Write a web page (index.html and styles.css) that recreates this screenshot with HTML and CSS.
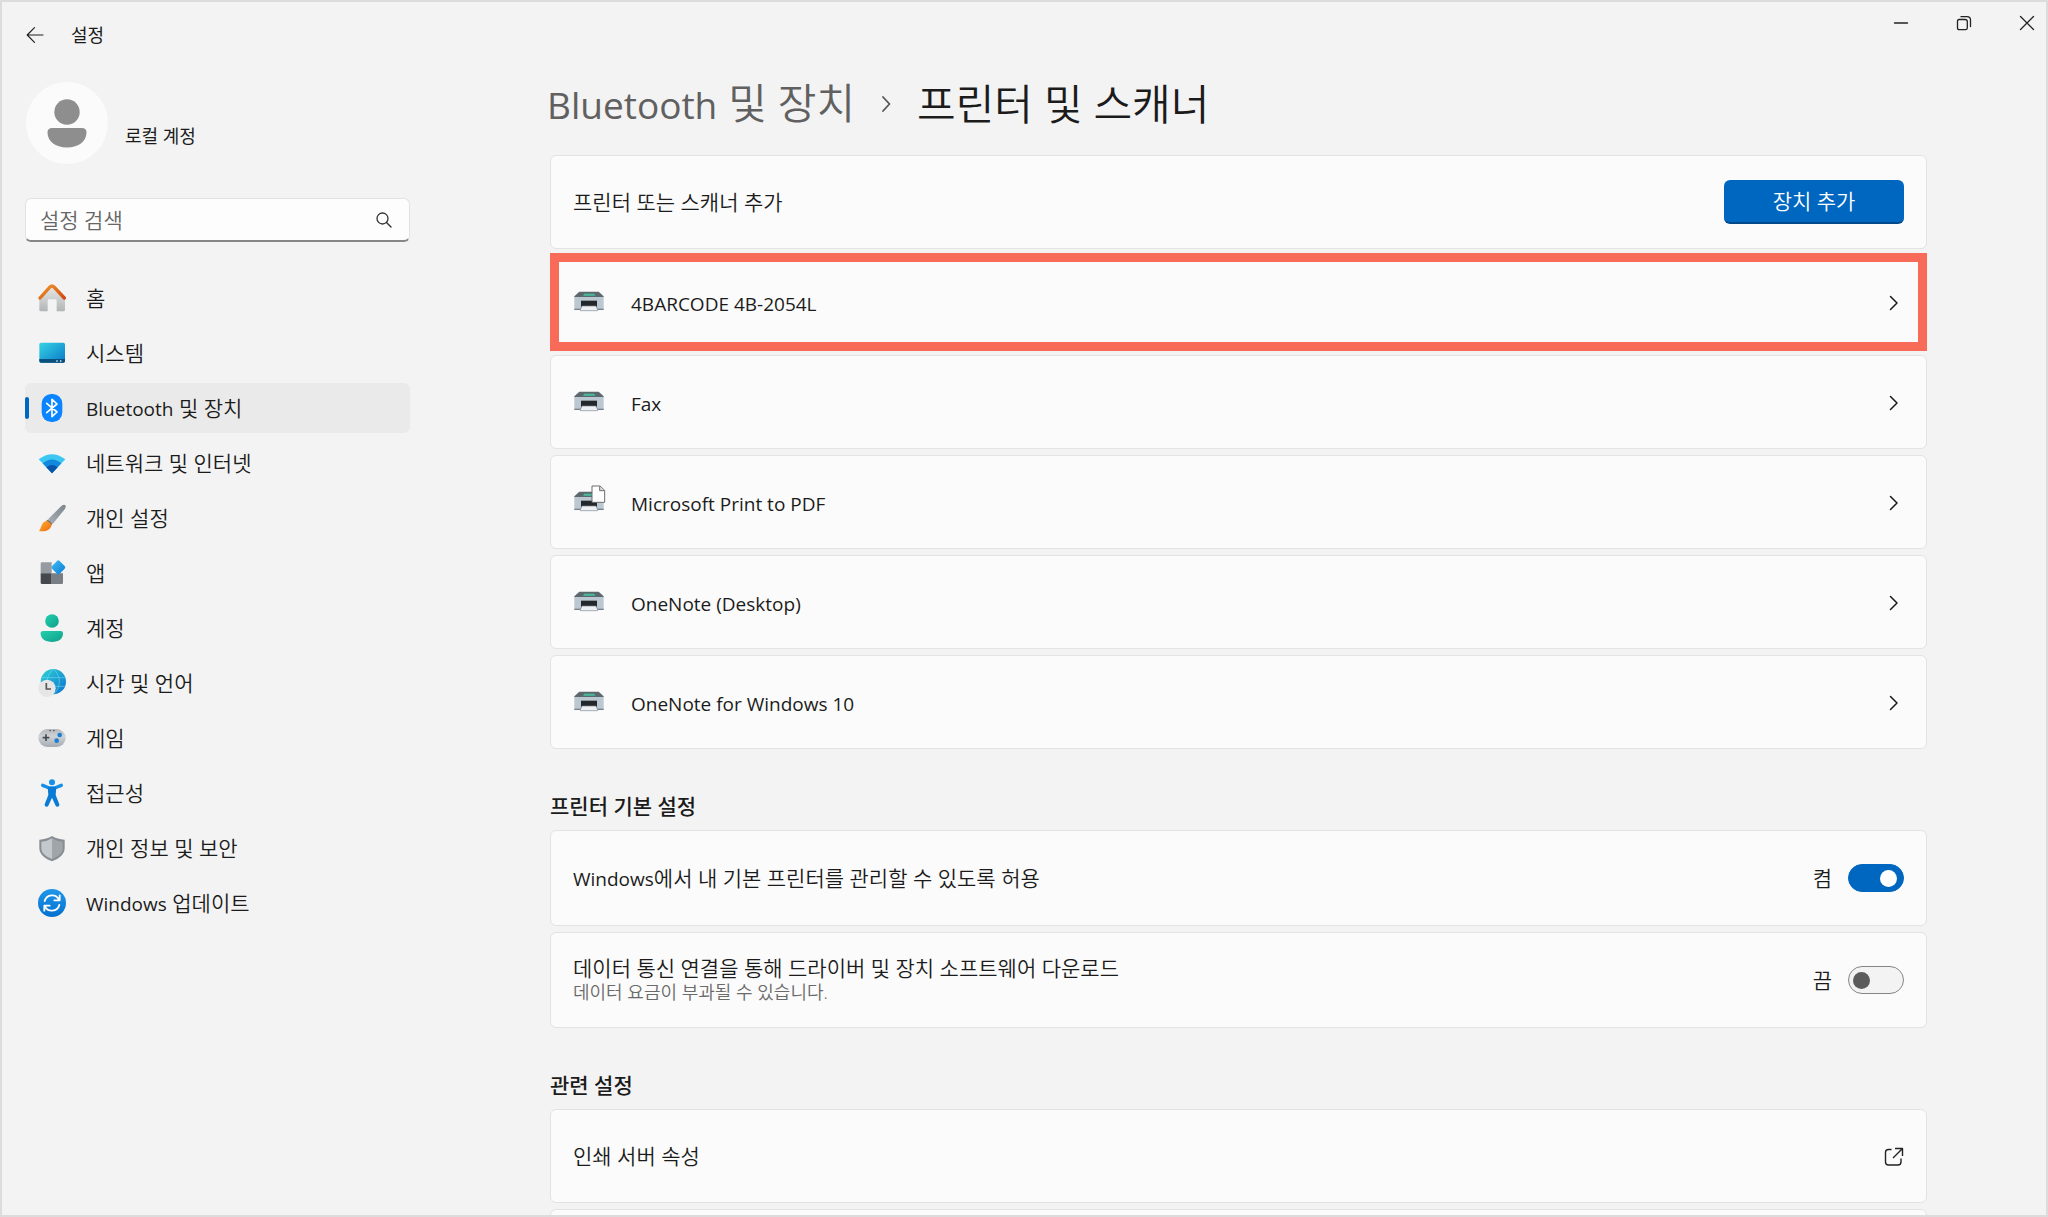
FILE: index.html
```html
<!DOCTYPE html>
<html lang="ko">
<head>
<meta charset="utf-8">
<meta name="viewport" content="width=device-width, initial-scale=1">
<title>설정</title>
<link rel="stylesheet" href="styles.css">
</head>
<body>
<svg class="defs" aria-hidden="true">
  <defs>
    <linearGradient id="g-roof" x1="0" y1="0" x2="1" y2="1"><stop offset="0" stop-color="#f0962a"/><stop offset="1" stop-color="#d24a10"/></linearGradient>
    <linearGradient id="g-wall" x1="0" y1="0" x2="0" y2="1"><stop offset="0" stop-color="#e8e8e8"/><stop offset="1" stop-color="#b2b4b6"/></linearGradient>
    <linearGradient id="g-screen" x1="0" y1="0" x2="1" y2="1"><stop offset="0" stop-color="#35d4e4"/><stop offset="1" stop-color="#0a78c8"/></linearGradient>
    <linearGradient id="g-handle" x1="1" y1="0" x2="0" y2="1"><stop offset="0" stop-color="#7c848c"/><stop offset="1" stop-color="#a9b0b8"/></linearGradient>
    <linearGradient id="g-tip" x1="0" y1="0" x2="1" y2="1"><stop offset="0" stop-color="#ffb02e"/><stop offset="1" stop-color="#ee6a10"/></linearGradient>
    <linearGradient id="g-diamond" x1="0" y1="0" x2="1" y2="1"><stop offset="0" stop-color="#43bdf2"/><stop offset="1" stop-color="#0b7cd6"/></linearGradient>
    <linearGradient id="g-person" x1="0" y1="0" x2="1" y2="1"><stop offset="0" stop-color="#22cfae"/><stop offset="1" stop-color="#10a08a"/></linearGradient>
    <linearGradient id="g-globe" x1="0" y1="0" x2="1" y2="1"><stop offset="0" stop-color="#2fd3d6"/><stop offset="1" stop-color="#0b71cf"/></linearGradient>
    <linearGradient id="g-pad" x1="0" y1="0" x2="0" y2="1"><stop offset="0" stop-color="#b4b7bb"/><stop offset=".4" stop-color="#cfd2d5"/><stop offset="1" stop-color="#a6abb2"/></linearGradient>
    <linearGradient id="g-sync" x1="0" y1="0" x2="0" y2="1"><stop offset="0" stop-color="#1f97ea"/><stop offset="1" stop-color="#0471cf"/></linearGradient>
    <symbol id="printer" viewBox="0 0 90 60" overflow="visible">
      <path d="M16 2H74L89 16V19H1V16Z" fill="#5c676e"/>
      <path d="M31 8H61L64 14H27Z" fill="#45bf9a"/>
      <path d="M1 18H89V56H1Z" fill="#bcc8d1"/>
      <path d="M1 53H89V57H1Z" fill="#75818b"/>
      <path d="M21 29H69V49H21Z" fill="#23282c"/>
      <path d="M24 45H66L71 56V59H19V56Z" fill="#eef1f3" stroke="#7d878f" stroke-width="2"/>
    </symbol>
    <symbol id="chevron" viewBox="0 0 20 20"><path d="M6.500 3.500 13 10 6.500 16.500" fill="none" stroke="currentColor" stroke-width="1.500" stroke-linecap="round" stroke-linejoin="round"/></symbol>
  </defs>
</svg>

<div class="window">
  <header class="titlebar">
    <div class="titlebar-left">
      <button class="back" type="button" aria-label="뒤로">
        <svg width="18" height="18" viewBox="0 0 18 18"><path d="M17 9H1.500M8.500 1.700 1.200 9 8.500 16.300" fill="none" stroke="#222" stroke-width="1.200" stroke-linecap="round" stroke-linejoin="round"/></svg>
      </button>
      <span>설정</span>
    </div>
    <div class="window-controls">
      <button type="button" aria-label="최소화"><svg width="16" height="16" viewBox="0 0 16 16"><path d="M1.500 8H14.500" stroke="#222" stroke-width="1.300" stroke-linecap="round"/></svg></button>
      <button type="button" aria-label="이전 크기로 복원"><svg width="16" height="16" viewBox="0 0 16 16"><path d="M3 4.500H9Q11.300 4.500 11.300 6.500V13Q11.300 14.700 9.500 14.700H3.200Q1.500 14.700 1.500 13V6Q1.500 4.500 3 4.500ZM5 1.700H11Q14.500 1.700 14.500 5V11.500" fill="none" stroke="#222" stroke-width="1.300" stroke-linecap="round"/></svg></button>
      <button type="button" aria-label="닫기"><svg width="16" height="16" viewBox="0 0 16 16"><path d="M1.500 1.500 14.500 14.500M14.500 1.500 1.500 14.500" stroke="#222" stroke-width="1.300" stroke-linecap="round"/></svg></button>
    </div>
  </header>

  <div class="layout">
    <aside class="sidebar">
      <div class="account">
        <span class="avatar">
          <svg width="40" height="49" viewBox="0 0 40 49" fill="#8e8e8e"><circle cx="20" cy="13" r="12.700"/><path d="M5 29H35Q39.500 29 39.500 33.500C39.500 42 32 48.500 20 48.500S.5 42 .5 33.500Q.5 29 5 29Z"/></svg>
        </span>
        <span class="account-name">로컬 계정</span>
      </div>

      <form class="search" role="search">
        <input type="search" placeholder="설정 검색" aria-label="설정 검색">
        <svg width="16" height="16" viewBox="0 0 16 16"><circle cx="6.500" cy="6.500" r="5.500" fill="none" stroke="#333" stroke-width="1.300"/><path d="M10.500 10.500 15 15" stroke="#333" stroke-width="1.400" stroke-linecap="round"/></svg>
      </form>

      <nav class="nav">
        <a href="#home"><svg viewBox="0 0 84 84"><path d="M4 42 42 8 81 42V78Q81 82 77 82H56V50Q56 46 52 46H33Q29 46 29 50V82H8Q4 82 4 78Z" fill="url(#g-wall)"/><path d="M6 42 36 9Q42 3 48 9L79 42" fill="none" stroke="url(#g-roof)" stroke-width="10" stroke-linecap="round"/></svg><span>홈</span></a>
        <a href="#system"><svg viewBox="0 0 84 84"><rect x="4" y="11" width="77" height="60" rx="5" fill="url(#g-screen)"/><path d="M4 60H81V66Q81 71 76 71H9Q4 71 4 66Z" fill="#0b4f7c"/><path d="M55 64H59V68H55ZM66 64H70V68H66Z" fill="#d4f1fb"/></svg><span>시스템</span></a>
        <a href="#devices" class="selected" aria-current="page"><svg viewBox="0 0 84 84"><rect x="11" y="0" width="62" height="84" rx="29" fill="#0a84ff"/><path d="M26 28 57 54 42 68V16L57 30 26 56" fill="none" stroke="#fff" stroke-width="5" stroke-linejoin="round" stroke-linecap="round"/></svg><span><span class="latin">Bluetooth</span> 및 장치</span></a>
        <a href="#network"><svg viewBox="0 0 84 84"><path d="M2 31Q42 0 82 31L42 73Z" fill="#3cc6f2"/><path d="M14 43Q42 20 70 43L42 73Z" fill="#1488dd"/><path d="M25 55Q42 41 59 55L42 73Z" fill="#0b55a8"/></svg><span>네트워크 및 인터넷</span></a>
        <a href="#personal"><svg viewBox="0 0 84 84"><path d="M30 46 70 6Q78 0 82 4Q85 8 80 16L44 60Z" fill="url(#g-handle)"/><path d="M29 47Q38 50 43 60L38 65 24 52Z" fill="#77706c"/><path d="M26 50Q36 54 41 62C38 78 22 84 3 81C10 74 8 55 26 50Z" fill="url(#g-tip)"/></svg><span>개인 설정</span></a>
        <a href="#apps"><svg viewBox="0 0 84 84"><path d="M12 10H41V43H8V14Q8 10 12 10Z" fill="#969ba1"/><path d="M8 43H41V75H12Q8 75 8 71Z" fill="#45494d"/><path d="M41 43H75V71Q75 75 71 75H41Z" fill="#797e84"/><path d="M57 6Q61 2 65 6L80 21Q84 25 80 29L65 44Q61 48 57 44L42 29Q38 25 42 21Z" fill="url(#g-diamond)"/></svg><span>앱</span></a>
        <a href="#accounts"><svg viewBox="0 0 84 84" fill="url(#g-person)"><circle cx="42" cy="21" r="20.500"/><path d="M16 51H68Q75 51 75 58C75 75 62 84 42 84S8 75 8 58Q8 51 16 51Z"/></svg><span>계정</span></a>
        <a href="#time"><svg viewBox="0 0 84 84"><circle cx="46" cy="38" r="38" fill="url(#g-globe)"/><path d="M10 26H82M12 52H82M46 0C22 20 22 56 46 76C70 56 70 20 46 0Z" fill="none" stroke="#7fe3ef" stroke-width="2.500" opacity=".6"/><circle cx="27" cy="58" r="26" fill="#e6e6e6"/><path d="M25 42V60H39" fill="none" stroke="#555" stroke-width="5"/></svg><span>시간 및 언어</span></a>
        <a href="#gaming"><svg viewBox="0 0 84 84"><rect x="1" y="15" width="82" height="54" rx="27" fill="url(#g-pad)"/><path d="M24 31V51M14 41H34" stroke="#454b52" stroke-width="5"/><circle cx="65" cy="33" r="7" fill="#1a7fd6"/><circle cx="56" cy="50" r="7" fill="#1a7fd6"/><path d="M34 20H39M45 20H50" stroke="#5b6066" stroke-width="4"/></svg><span>게임</span></a>
        <a href="#access"><svg viewBox="0 0 84 84"><circle cx="42" cy="10" r="9" fill="#1590e6"/><path d="M14 19 34 27H50L70 19" fill="none" stroke="#1590e6" stroke-width="10" stroke-linecap="round" stroke-linejoin="round"/><path d="M29 24H55L53 48 64 76Q65 81 60 83 55 84 53 80L42 56 31 80Q29 84 24 83 19 81 20 76L31 48Z" fill="#0a7bd4"/></svg><span>접근성</span></a>
        <a href="#privacy"><svg viewBox="0 0 84 84"><path d="M42 6Q58 16 80 17V42C80 62 62 75 42 82C22 75 4 62 4 42V17Q26 16 42 6Z" fill="#878d93"/><path d="M42 13V75C24 68 10 58 10 42V23Q28 22 42 13Z" fill="#c3c8cc"/><path d="M42 13Q56 22 74 23V42C74 58 60 68 42 75Z" fill="#a0a5aa"/></svg><span>개인 정보 및 보안</span></a>
        <a href="#update"><svg viewBox="0 0 84 84"><circle cx="42" cy="42" r="42" fill="url(#g-sync)"/><path d="M20 36C26 15 54 13 63 32M65 19V34H49M64 48C58 69 30 71 21 52M19 65V50H35" fill="none" stroke="#fff" stroke-width="5.500" stroke-linecap="round" stroke-linejoin="round"/></svg><span><span class="latin">Windows</span> 업데이트</span></a>
      </nav>
    </aside>

    <main class="content">
      <h1 class="breadcrumb">
        <a href="#devices"><span class="latin">Bluetooth</span> 및 장치</a>
        <svg width="12" height="18" viewBox="0 0 12 18"><path d="M3 2 9.500 9 3 16" fill="none" stroke="#555" stroke-width="1.800" stroke-linecap="round" stroke-linejoin="round"/></svg>
        <span>프린터 및 스캐너</span>
      </h1>

      <section class="cards">
        <div class="card"><span class="card-text">프린터 또는 스캐너 추가</span><button class="primary" type="button">장치 추가</button></div>
        <a class="card highlighted" href="#p1"><svg class="device"><use href="#printer"/></svg><span class="card-text latin">4BARCODE 4B-2054L</span><svg class="glyph"><use href="#chevron"/></svg></a>
        <a class="card" href="#p2"><svg class="device"><use href="#printer"/></svg><span class="card-text latin">Fax</span><svg class="glyph"><use href="#chevron"/></svg></a>
        <a class="card" href="#p3"><svg class="device" viewBox="0 0 90 60"><use href="#printer" width="90" height="60"/><path d="M54-15H78L92-2V34H54Z" fill="#fff" stroke="#6c6c6c" stroke-width="3" stroke-linejoin="round"/><path d="M77-14V-1H91" fill="#ddd" stroke="#6c6c6c" stroke-width="3"/></svg><span class="card-text latin">Microsoft Print to PDF</span><svg class="glyph"><use href="#chevron"/></svg></a>
        <a class="card" href="#p4"><svg class="device"><use href="#printer"/></svg><span class="card-text latin">OneNote (Desktop)</span><svg class="glyph"><use href="#chevron"/></svg></a>
        <a class="card" href="#p5"><svg class="device"><use href="#printer"/></svg><span class="card-text latin">OneNote for Windows 10</span><svg class="glyph"><use href="#chevron"/></svg></a>
      </section>

      <h2>프린터 기본 설정</h2>
      <section class="cards preferences">
        <div class="card">
          <label class="card-text" for="manage"><span class="latin">Windows</span>에서 내 기본 프린터를 관리할 수 있도록 허용</label>
          <span class="state">켬</span><input class="switch" id="manage" type="checkbox" role="switch" checked>
        </div>
        <div class="card">
          <label class="card-text" for="metered">데이터 통신 연결을 통해 드라이버 및 장치 소프트웨어 다운로드<small>데이터 요금이 부과될 수 있습니다.</small></label>
          <span class="state">끔</span><input class="switch" id="metered" type="checkbox" role="switch">
        </div>
      </section>

      <h2>관련 설정</h2>
      <section class="cards">
        <a class="card" href="#server"><span class="card-text">인쇄 서버 속성</span><svg class="glyph" viewBox="0 0 20 20"><path d="M7.500 2.500H4.500Q1.500 2.500 1.500 5.500V15Q1.500 18 4.500 18H14Q17 18 17 15V11.500M11 1.500H18.500V9M18 2 9 11" fill="none" stroke="#222" stroke-width="1.400" stroke-linejoin="round"/></svg></a>
        <div class="card"></div>
      </section>
    </main>
  </div>
</div>
</body>
</html>
```
FILE: styles.css
```css
* {
  box-sizing: border-box;
}

body {
  margin: 0;
  background: #f3f3f3;
  color: #1b1b1b;
  font-family: "Open Sans", "Noto Sans CJK KR", sans-serif;
  font-size: 21px;
  font-weight: 350;
  line-height: 24px;
}

a {
  color: inherit;
  text-decoration: none;
}

button,
input {
  font: inherit;
  color: inherit;
}

.defs {
  position: absolute;
  width: 0;
  height: 0;
}

.latin {
  font-size: 19px;
  font-weight: 400;
}

.window {
  display: flex;
  flex-direction: column;
  height: 100vh;
  overflow: hidden;
  border: 2px solid #dcdcdc;
}

/* Title bar */
.titlebar {
  display: flex;
  flex: none;
  justify-content: space-between;
  height: 65px;
}

.titlebar-left {
  display: flex;
  align-items: center;
  gap: 27px;
  padding-left: 24px;
  font-size: 18px;
  font-weight: 400;
}

.titlebar button {
  display: grid;
  place-items: center;
  padding: 0;
  border: 0;
  background: none;
}

.back {
  width: 18px;
}

.window-controls {
  display: flex;
  align-items: flex-start;
  margin-right: -12px;
}

.window-controls button {
  width: 63px;
  height: 42px;
}

/* Columns */
.layout {
  display: flex;
  flex: 1;
  gap: 140px;
  min-height: 0;
  padding: 0 119px 0 23px;
}

.sidebar {
  flex: none;
  width: 385px;
}

.account {
  display: flex;
  align-items: center;
  gap: 17px;
  height: 82px;
  margin-top: 15px;
  padding-left: 1px;
  font-size: 18px;
  font-weight: 400;
}

.avatar {
  display: grid;
  place-items: center;
  width: 82px;
  height: 82px;
  border-radius: 50%;
  background: #fbfbfb;
}

.account-name {
  padding-top: 26px;
}

.search {
  display: flex;
  align-items: center;
  height: 44px;
  margin-top: 34px;
  padding: 0 17px 0 14px;
  border: 1px solid #e2e2e2;
  border-bottom: 2px solid #868686;
  border-radius: 6px;
  background: #fdfdfd;
}

.search input {
  flex: 1;
  min-width: 0;
  padding: 0;
  border: 0;
  outline: 0;
  background: none;
}

.search input::placeholder {
  color: #666;
}

.nav {
  display: flex;
  flex-direction: column;
  gap: 5px;
  margin-top: 31px;
}

.nav a {
  display: flex;
  align-items: center;
  gap: 20px;
  height: 50px;
  padding-left: 13px;
  border-radius: 6px;
}

.nav svg {
  flex: none;
  width: 28px;
  height: 28px;
}

.nav .selected {
  position: relative;
  background: #eaeaea;
}

.nav .selected::before {
  content: "";
  position: absolute;
  left: 0;
  top: 14px;
  width: 4px;
  height: 22px;
  border-radius: 2px;
  background: #0067c0;
}

/* Content */
.content {
  flex: 1;
  min-width: 0;
}

.breadcrumb {
  display: flex;
  align-items: center;
  gap: 25px;
  height: 74px;
  margin: 0 0 14px -3px;
  font-size: 42px;
  font-weight: 350;
  line-height: 48px;
}

.breadcrumb .latin {
  font-size: 37px;
  font-weight: 400;
}

.breadcrumb a {
  color: #606060;
}

h2 {
  margin: 45px 0 12px;
  font-size: 21px;
  font-weight: 500;
  line-height: 24px;
}

.cards {
  display: flex;
  flex-direction: column;
  gap: 6px;
}

.card {
  position: relative;
  display: flex;
  align-items: center;
  height: 94px;
  padding: 0 22px;
  border: 1px solid #e3e3e3;
  border-radius: 6px;
  background: #fbfbfb;
}

.preferences .card {
  height: 96px;
}

.highlighted::after {
  content: "";
  position: absolute;
  inset: -3px -1px;
  border: 9px solid #f96b59;
}

.card-text {
  flex: 1;
}

.card-text.latin {
  padding-top: 3px;
}

.card-text small {
  display: block;
  color: #6a6a6a;
  font-size: 18px;
}

.device {
  width: 30px;
  height: 20px;
  margin: 0 27px 2px 1px;
  overflow: visible;
}

.glyph {
  width: 20px;
  height: 20px;
  margin-top: 2px;
}

.primary {
  width: 180px;
  height: 44px;
  padding: 0;
  border: 0;
  border-bottom: 2px solid #004a8c;
  border-radius: 6px;
  background: #0067c0;
  color: #fff;
}

.state {
  margin-right: 16px;
}

.switch {
  display: flex;
  align-items: center;
  appearance: none;
  width: 56px;
  height: 28px;
  margin: 0;
  padding: 0 4px;
  border: 1px solid #868686;
  border-radius: 14px;
  background: #f3f3f3;
}

.switch::before {
  content: "";
  width: 17px;
  height: 17px;
  border-radius: 50%;
  background: #5c5c5c;
}

.switch:checked {
  justify-content: flex-end;
  padding: 0 6px;
  border-color: #0067c0;
  background: #0067c0;
}

.switch:checked::before {
  background: #fff;
}
```
